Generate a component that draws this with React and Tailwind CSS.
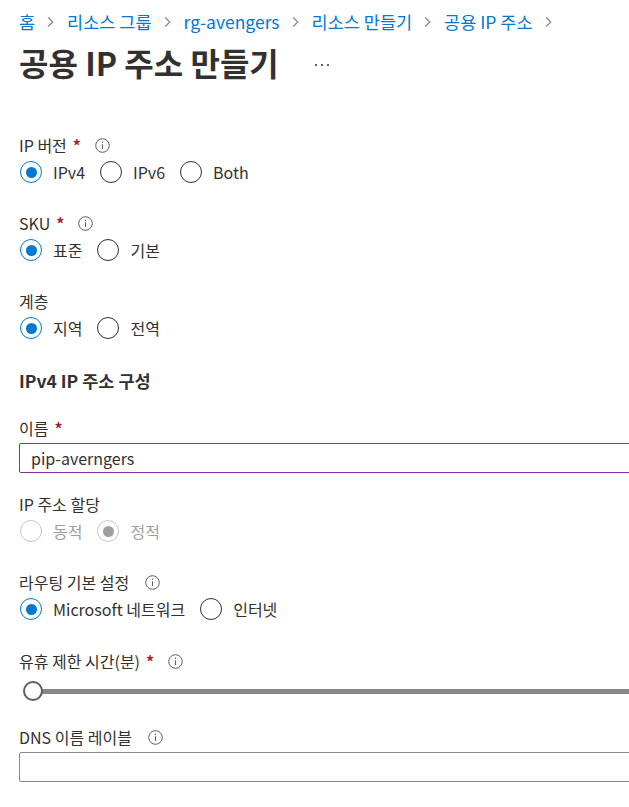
import React from "react";

const font = { fontFamily: '"Noto Sans CJK KR", "Noto Sans", sans-serif' };

function Chevron() {
  return (
    <svg width="7" height="12" viewBox="0 0 7 12" className="shrink-0">
      <path d="M1.2 1.5 L5.8 6 L1.2 10.5" fill="none" stroke="#8a8886" strokeWidth="1.2" />
    </svg>
  );
}

function Info() {
  return (
    <svg width="15" height="15" viewBox="0 0 15 15" className="shrink-0">
      <circle cx="7.5" cy="7.5" r="6.8" fill="none" stroke="#605e5c" strokeWidth="1" />
      <path d="M7.5 6.3 V11" stroke="#605e5c" strokeWidth="1.1" />
      <circle cx="7.5" cy="4.3" r="0.75" fill="#605e5c" />
    </svg>
  );
}

function Label({ text, required, info, className = "" }) {
  return (
    <div className={"flex h-5 items-center text-[16px] leading-5 text-[#323130] " + className}>
      <span>{text}</span>
      {required && <span className="ml-[6px] font-semibold text-[#a4262c]">*</span>}
      {info && <span className={required ? "ml-[14px]" : "ml-[16px]"}><Info /></span>}
    </div>
  );
}

function Radio({ checked, disabled, label }) {
  const ring = disabled ? "border-[#c8c6c4]" : checked ? "border-[#0078d4]" : "border-[#323130]";
  const dot = disabled ? "bg-[#a19f9d]" : "bg-[#0078d4]";
  return (
    <div className="flex items-center">
      <span className={"flex h-[22px] w-[22px] items-center justify-center rounded-full border " + ring}>
        {checked && <span className={"h-[11px] w-[11px] rounded-full " + dot} />}
      </span>
      <span className={"ml-[11px] text-[16px] " + (disabled ? "text-[#a19f9d]" : "text-[#323130]")}>
        {label}
      </span>
    </div>
  );
}

function RadioRow({ children, className = "" }) {
  return <div className={"flex h-6 items-center gap-[15px] pl-px " + className}>{children}</div>;
}

export default function App() {
  const crumbs = ["홈", "리소스 그룹", "rg-avengers", "리소스 만들기", "공용 IP 주소"];
  return (
    <div className="h-[807px] w-[629px] overflow-hidden bg-white" style={font}>
      <div className="w-[760px] pl-[19px]">
        <nav className="mt-[12px] flex h-5 items-center gap-[12px] text-[17.5px] text-[#0078d4]">
          {crumbs.map((c, i) => (
            <React.Fragment key={i}>
              <span className={i === 0 ? "" : "ml-[1px]"}>{c}</span>
              <Chevron />
            </React.Fragment>
          ))}
        </nav>

        <div className="mt-[14px] flex h-8 items-center">
          <h1 className="text-[32px] font-bold leading-8 text-[#323130]">공용 IP 주소 만들기</h1>
          <span className="ml-[36px] mt-[6px] flex gap-[4px]">
            <span className="h-[2px] w-[2px] rounded-full bg-[#323130]" />
            <span className="h-[2px] w-[2px] rounded-full bg-[#323130]" />
            <span className="h-[2px] w-[2px] rounded-full bg-[#323130]" />
          </span>
        </div>

        <Label className="mt-[57px]" text="IP 버전" required info />
        <RadioRow className="mt-[5px]">
          <Radio checked label="IPv4" />
          <Radio label="IPv6" />
          <Radio label="Both" />
        </RadioRow>

        <Label className="mt-[29px]" text="SKU" required info />
        <RadioRow className="mt-[5px]">
          <Radio checked label="표준" />
          <Radio label="기본" />
        </RadioRow>

        <Label className="mt-[29px]" text="계층" />
        <RadioRow className="mt-[5px]">
          <Radio checked label="지역" />
          <Radio label="전역" />
        </RadioRow>

        <h2 className="mt-[29px] h-6 text-[17.5px] font-bold leading-6 text-[#323130]">IPv4 IP 주소 구성</h2>

        <Label className="mt-[25px]" text="이름" required />
        <div className="mt-[5px] flex h-[30px] items-center rounded-[2px] border border-[#8a2da5] pl-[11px] text-[16px] text-[#323130]">
          pip-averngers
        </div>

        <Label className="mt-[21px]" text="IP 주소 할당" />
        <RadioRow className="mt-[5px]">
          <Radio disabled label="동적" />
          <Radio disabled checked label="정적" />
        </RadioRow>

        <Label className="mt-[29px]" text="라우팅 기본 설정" info />
        <RadioRow className="mt-[5px]">
          <Radio checked label="Microsoft 네트워크" />
          <Radio label="인터넷" />
        </RadioRow>

        <Label className="mt-[30px]" text="유휴 제한 시간(분)" required info />
        <div className="mt-[10px] flex h-5 items-center pl-[4px]">
          <span className="z-10 h-5 w-5 shrink-0 rounded-full border-2 border-[#605e5c] bg-white" />
          <span className="-ml-[2px] h-[5px] flex-1 bg-[#8a8886]" />
        </div>

        <Label className="mt-[26px]" text="DNS 이름 레이블" info />
        <div className="mt-[5px] h-[30px] rounded-[2px] border border-[#8a8886]" />
      </div>
    </div>
  );
}
